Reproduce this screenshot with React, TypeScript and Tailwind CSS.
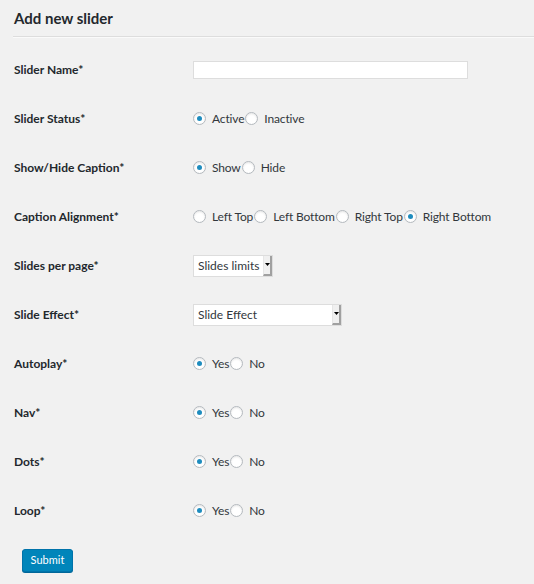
import React from 'react';

const font = { fontFamily: 'Lato, "Open Sans", sans-serif' };

const Radio = ({ checked }: { checked?: boolean }) => (
  <span className="inline-flex items-center justify-center w-[13px] h-[13px] rounded-full border border-[#b4b9be] bg-white shadow-[inset_0_1px_2px_rgba(0,0,0,0.1)] shrink-0">
    {checked && <span className="w-[5px] h-[5px] rounded-full bg-[#1e8cbe]" />}
  </span>
);

const RadioGroup = ({ options, selected }: { options: string[]; selected: number }) => (
  <div className="flex items-center text-[12px] tracking-[-0.15px] text-[#32373c]">
    {options.map((opt, i) => (
      <div key={opt} className="flex items-center">
        <Radio checked={i === selected} />
        <span className="ml-[6px] mr-[1px]">{opt}</span>
      </div>
    ))}
  </div>
);

const Select = ({ label, width }: { label: string; width: string }) => (
  <div className={`flex items-stretch h-[22px] bg-white border border-[#ddd] ${width}`}>
    <span className="flex-1 flex items-center pl-[4px] text-[12px] text-[#32373c]">{label}</span>
    <span className="w-[9px] flex items-center justify-center bg-[#f0f0f0] border-r-2 border-b-2 border-[#a0a0a0] border-l border-l-[#e6e6e6]">
      <svg width="5" height="3" viewBox="0 0 5 3">
        <path d="M0 0h5L2.5 3z" fill="#000" />
      </svg>
    </span>
  </div>
);

const Row = ({ label, children }: { label: string; children: React.ReactNode }) => (
  <div className="flex items-center h-[49px]">
    <div className="w-[179px] text-[12px] font-bold text-[#23282d]">{label}</div>
    <div>{children}</div>
  </div>
);

export default function App() {
  const yesNo = ['Yes', 'No'];

  return (
    <div className="min-h-[584px] bg-[#f1f1f1] pl-[14px]" style={font}>
      {/* Header */}
      <h1 className="pt-[6px] text-[15px] font-bold text-[#23282d] leading-[24px]">Add new slider</h1>
      <div className="mt-[6px] -ml-[1px] border-t border-[#ddd] border-b border-b-[#fafafa]" />

      <div className="mt-[7px]">
        <Row label="Slider Name*">
          <input type="text" className="w-[275px] h-[18px] bg-white border border-[#ddd] outline-none" />
        </Row>
        <Row label="Slider Status*">
          <RadioGroup options={['Active', 'Inactive']} selected={0} />
        </Row>
        <Row label="Show/Hide Caption*">
          <RadioGroup options={['Show', 'Hide']} selected={0} />
        </Row>
        <Row label="Caption Alignment*">
          <RadioGroup options={['Left Top', 'Left Bottom', 'Right Top', 'Right Bottom']} selected={3} />
        </Row>
        <Row label="Slides per page*">
          <Select label="Slides limits" width="w-[80px]" />
        </Row>
        <Row label="Slide Effect*">
          <Select label="Slide Effect" width="w-[149px]" />
        </Row>
        <Row label="Autoplay*">
          <RadioGroup options={yesNo} selected={0} />
        </Row>
        <Row label="Nav*">
          <RadioGroup options={yesNo} selected={0} />
        </Row>
        <Row label="Dots*">
          <RadioGroup options={yesNo} selected={0} />
        </Row>
        <Row label="Loop*">
          <RadioGroup options={yesNo} selected={0} />
        </Row>
      </div>

      <button className="mt-[14px] ml-[8px] w-[51px] h-[23px] rounded-[3px] bg-[#0085ba] border border-[#0073aa] text-white text-[11px] shadow-[0_1px_0_#006799]">
        Submit
      </button>
    </div>
  );
}
